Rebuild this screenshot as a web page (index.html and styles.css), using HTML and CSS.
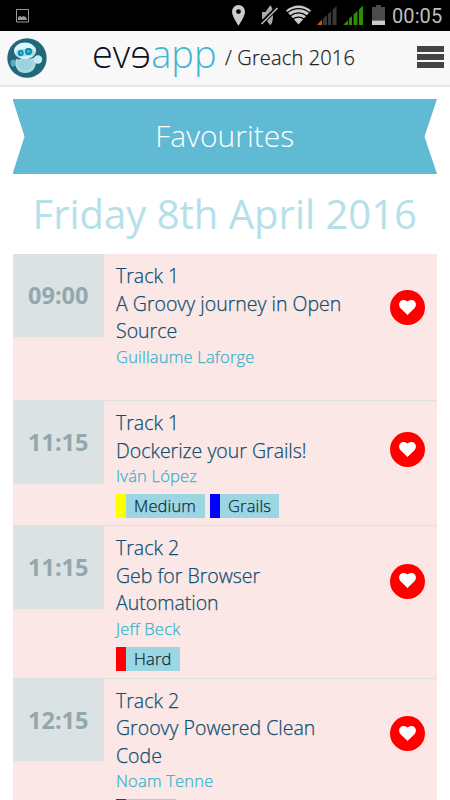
FILE: index.html
```html
<!DOCTYPE html>
<html lang="en">
<head>
<meta charset="utf-8">
<title>Favourites</title>
<link rel="stylesheet" href="styles.css">
</head>
<body>
<div class="status">
  <svg class="status-icons" width="450" height="31" viewBox="0 0 450 31">
    <path d="M16.500 9.500h12v12.500h-12z" fill="none" stroke="#999"/>
    <path d="M18 20v-3l2-1 2 1 1-1 3 1 1 3z" fill="#999"/>
    <path fill="#ccc" fill-rule="evenodd" d="M238.500 5a6.500 6.500 0 0 0-6.500 6.700c0 4.500 6.500 14 6.500 14s6.500-9.500 6.500-14A6.500 6.500 0 0 0 238.500 5zm0 4.200a2.400 2.400 0 1 1 0 4.800 2.400 2.400 0 0 1 0-4.800z"/>
    <path fill="#aaa" d="M262 12h3.500l4.500-6.500c4 1 4 18.500 0 19.500l-4.500-6H262z"/>
    <path d="M277 8l-16 16" stroke="#000" stroke-width="4"/><path d="M277.500 8l-16 16" stroke="#bbb" stroke-width="1.600"/>
    <path d="M298.500 24.500L286 10.500q12.500-10 25 0z" fill="#ccc"/>
    <g fill="none" stroke="#000" stroke-width="1.200"><path d="M287 12.800q11.500-8.500 23 0M290 16q8.500-6.200 17 0M292.500 19.200q6-4.200 12 0"/></g>
    <path fill="#383838" d="M323 18.500l4-3.600V25h-4zM328 14l3-2.700V25h-3zM332.500 10l4-4V25h-4z"/><path fill="#d35400" d="M317 25l5-5.500V25z"/>
    <path fill="#299000" d="M343 25l5-5v5zM349 18.800l3-2.900V25h-3zM353.500 14.500l4-3.700V25h-4zM359 9.500l4-4V25h-4z"/>
    <path fill="#4b4b4b" d="M376 5h5v2h4v13.500h-13V7h4z"/><path fill="#ccc" d="M372 20.500h13V25h-13z"/>
  </svg>
  <span class="clock">00:05</span>
</div>
<header class="bar">
  <svg class="avatar" width="40" height="40" viewBox="0 0 40 40">
    <circle cx="20" cy="20" r="19.700" fill="#216879"/>
    <ellipse cx="6.500" cy="25" rx="3" ry="3.500" fill="#5babbd"/>
    <path d="M9 21q10 2 20-2l0 4c0 8-4 12-11 12-6 0-9.500-4-9.500-10z" fill="#a9dbe7"/>
    <ellipse cx="18" cy="26" rx="7.500" ry="6.500" fill="#9dd2df"/>
    <circle cx="31" cy="21.500" r="4.200" fill="#c3edf5"/>
    <ellipse cx="18" cy="12.800" rx="11" ry="8.300" fill="#dcf7fb"/>
    <rect x="9" y="11" width="18.500" height="7.500" rx="3.700" transform="rotate(-4 18 14)" fill="#a9d9e2"/>
    <circle cx="13.800" cy="15" r="2.900" fill="#087da0"/><circle cx="21.500" cy="13.500" r="3.400" fill="#087da0"/>
    <circle cx="14" cy="15" r="1.700" fill="#15c4e8"/><circle cx="21.500" cy="13.500" r="2" fill="#15c4e8"/>
  </svg>
  <div class="brand"><span class="logo">ev<span class="flip">e</span><span class="app">app</span></span><span class="event">/ Greach 2016</span></div>
  <div class="menu"><i></i><i></i><i></i></div>
</header>
<main>
  <h1 class="ribbon">Favourites</h1>
  <h2 class="day">Friday 8th April 2016</h2>
  <section class="talk first">
    <div class="time">09:00</div>
    <div class="info"><p>Track 1</p><p>A Groovy journey in Open<br>Source</p><p class="speaker">Guillaume Laforge</p></div>
    <div class="fav"><svg width="17" height="15" viewBox="0 0 17 15"><path d="M8.500 15L1.300 8C-1.500 4 1 0 4.500 0c2 0 3.200.8 4 1.600C9.300.8 10.500 0 12.500 0 16 0 18.500 4 15.700 8z"/></svg></div>
  </section>
  <section class="talk second">
    <div class="time">11:15</div>
    <div class="info"><p>Track 1</p><p>Dockerize your Grails!</p><p class="speaker">Iván López</p>
      <div class="tags"><span class="tag yellow medium">Medium</span><span class="tag blue grails">Grails</span></div></div>
    <div class="fav"><svg width="17" height="15" viewBox="0 0 17 15"><path d="M8.500 15L1.300 8C-1.500 4 1 0 4.500 0c2 0 3.200.8 4 1.600C9.300.8 10.500 0 12.500 0 16 0 18.500 4 15.700 8z"/></svg></div>
  </section>
  <section class="talk third">
    <div class="time">11:15</div>
    <div class="info"><p>Track 2</p><p>Geb for Browser<br>Automation</p><p class="speaker">Jeff Beck</p>
      <div class="tags"><span class="tag red hard">Hard</span></div></div>
    <div class="fav"><svg width="17" height="15" viewBox="0 0 17 15"><path d="M8.500 15L1.300 8C-1.500 4 1 0 4.500 0c2 0 3.200.8 4 1.600C9.300.8 10.500 0 12.500 0 16 0 18.500 4 15.700 8z"/></svg></div>
  </section>
  <section class="talk third">
    <div class="time">12:15</div>
    <div class="info"><p>Track 2</p><p>Groovy Powered Clean<br>Code</p><p class="speaker">Noam Tenne</p>
      <div class="tags"><span class="tag green easy"></span></div></div>
    <div class="fav"><svg width="17" height="15" viewBox="0 0 17 15"><path d="M8.500 15L1.300 8C-1.500 4 1 0 4.500 0c2 0 3.200.8 4 1.600C9.300.8 10.500 0 12.500 0 16 0 18.500 4 15.700 8z"/></svg></div>
  </section>
</main>
</body>
</html>
```
FILE: styles.css
```css
* { box-sizing: border-box; }
body { margin: 0; width: 450px; height: 800px; overflow: hidden; background: #fff; font-family: "Open Sans", sans-serif; }
h1, h2, p { margin: 0; font-weight: 400; }

.status { display: flex; height: 31px; background: #000; }
.status-icons { flex: none; }
.clock { width: 60px; margin-left: -58px; color: #bebebe; font: 400 20px/33px Roboto, sans-serif; letter-spacing: 0.1px; white-space: nowrap; }

.bar { display: flex; align-items: flex-start; height: 56px; background: #f8f8f8; border-bottom: 2px solid #e9e9e9; }
.avatar { flex: none; margin: 7px 0 0 7px; }
.brand { display: flex; flex: none; width: 370px; padding-left: 45px; color: #222; }
.logo { width: 125px; margin-right: 8px; font-size: 38px; font-weight: 300; line-height: 44px; color: #10101f; white-space: nowrap; }
.flip { display: inline-block; transform: scaleX(-1); }
.app { color: #43b5d0; }
.event { font-size: 20px; font-weight: 300; letter-spacing: 0.15px; line-height: 54px; white-space: nowrap; -webkit-text-stroke: 0.25px; }
.menu { display: flex; flex-direction: column; gap: 2px; margin-top: 15px; }
.menu i { width: 27px; height: 6px; background: #444; }

main { padding: 12px 13px 0 12.500px; }
.ribbon { height: 75px; background: #60bad3; color: #fff; font-size: 30px; font-weight: 300; line-height: 74px; text-align: center; clip-path: polygon(0 0, 100% 0, 412px 50%, 100% 100%, 0 100%, 12px 50%); }
.day { height: 80px; color: #b5e0ea; font-size: 40px; line-height: 80px; text-align: center; white-space: nowrap; }

.talk { display: flex; background: #fbe7e6; border-bottom: 1px solid #dfe0e2; }
.first { height: 147px; }
.second { height: 125px; }
.third { height: 152.500px; }
.time { flex: none; width: 91.500px; height: 82.500px; background: #dae2e4; color: #93a7ad; font-size: 23.500px; font-weight: 700; line-height: 83px; text-align: center; }
.info { flex: none; width: 286px; padding: 8px 0 0 12px; color: #0d4f70; font-size: 19.500px; font-weight: 300; line-height: 27.500px; white-space: nowrap; -webkit-text-stroke: 0.25px; }
.info p { font-weight: inherit; }
.info .speaker { color: #34b3ce; font-size: 16.500px; letter-spacing: 0.2px; line-height: 24px; }
.tags { display: flex; gap: 5px; margin-top: 6px; }
.tag { height: 24px; padding-left: 8px; border-left: 10px solid; background: #9cd6e3; color: #102b37; font-size: 16.500px; letter-spacing: 0.15px; line-height: 23px; }
.yellow { border-left-color: #ff0; }
.blue { border-left-color: #00f; }
.red { border-left-color: #f00; }
.green { border-left-color: #060; }
.medium { width: 89px; }
.grails { width: 69px; }
.hard { width: 64px; }
.easy { width: 60px; }
.fav { display: flex; align-items: center; justify-content: center; width: 35px; height: 35px; margin-top: 36px; border-radius: 50%; background: #f00; }
.second .fav { margin-top: 31px; }
.third .fav { margin-top: 37.500px; }
.fav svg { margin: 0 1px 1px 0; fill: #fff; }
```
